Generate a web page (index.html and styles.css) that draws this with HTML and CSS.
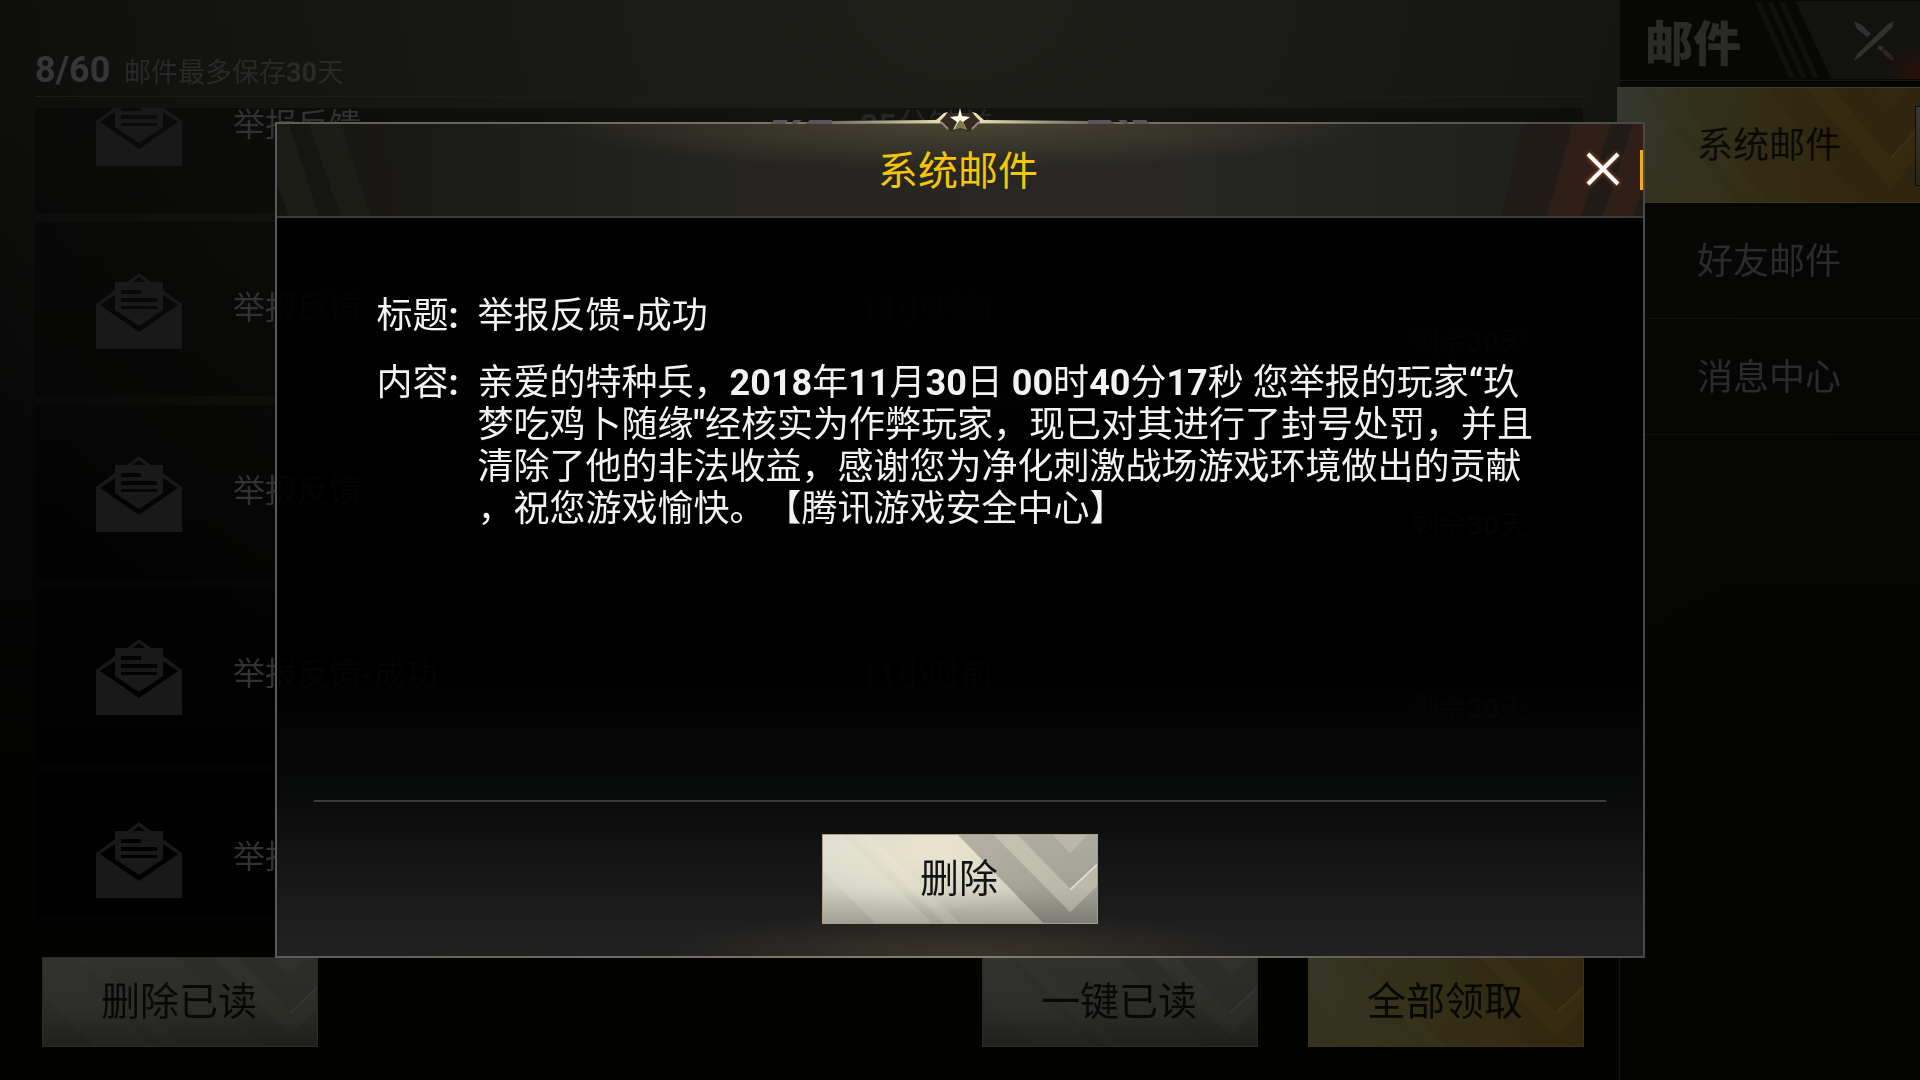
FILE: index.html
```
<!DOCTYPE html>
<html lang="zh-CN">
<head>
  <meta charset="UTF-8">
  <meta name="viewport" content="width=device-width, initial-scale=1.0">
  <link rel="stylesheet" href="styles.css">
  <title>邮件</title>
</head>
<body>
  <!-- shared shapes -->
  <svg class="defs" aria-hidden="true">
    <symbol id="mail" viewBox="0 0 86 76">
      <path d="M0 31 L43 59 L86 31 V76 H0 Z M0 31 L19 17 V22 L4 32 L43 59 L82 32 L67 22 V17 L86 31 L43 62 Z"/>
      <path d="M31 9 L43 0 L55 9 H49 L43 4 L37 9 Z"/>
      <path fill-rule="evenodd" d="M19 9 H67 V37 L43 53 L19 37 Z M25 17 V21 H45 V17 Z M25 25 V29 H61 V25 Z M25 33 V36 H61 V33 Z"/>
    </symbol>
    <symbol id="chevrons" viewBox="0 0 276 90" preserveAspectRatio="none">
      <path fill="#fff" opacity=".12" d="M20 0 L110 90 H52 L0 38 V0 Z M32 0 H48 L138 90 H122 Z"/>
      <path fill="#000" opacity=".22" d="M136 0 H276 V90 H222 Z"/>
      <path fill="#f4f2dc" opacity=".3" d="M172 0 H196 L249 55 L276 30 V52 L249 79 Z"/>
      <path fill="#f4f2dc" opacity=".2" d="M232 0 H266 L249 19 Z"/>
      <path fill="none" stroke="#fff" stroke-width="2" opacity=".5" d="M249 56 L276 30"/>
    </symbol>
  </svg>

  <div class="page">
    <main class="mail">
      <header class="mail-head">
        <span class="count">8/60</span>
        <span class="hint">邮件最多保存<b>30</b>天</span>
      </header>

      <div class="list-wrap">
        <ul class="list">
          <li class="item">
            <svg class="mail-icon"><use href="#mail"/></svg>
            <span class="name">举报反馈</span>
            <span class="time"><b>35</b>分钟前</span>
            <span class="left"></span>
          </li>
          <li class="item">
            <svg class="mail-icon"><use href="#mail"/></svg>
            <span class="name">举报反馈</span>
            <span class="time"><b>11</b>小时前</span>
            <span class="left">剩余<b>30</b>天</span>
          </li>
          <li class="item">
            <svg class="mail-icon"><use href="#mail"/></svg>
            <span class="name">举报反馈</span>
            <span class="time"></span>
            <span class="left">剩余<b>30</b>天</span>
          </li>
          <li class="item">
            <svg class="mail-icon"><use href="#mail"/></svg>
            <span class="name">举报反馈<b>-</b>成功</span>
            <span class="time"><b>11</b>小时前</span>
            <span class="left">剩余<b>30</b>天</span>
          </li>
          <li class="item">
            <svg class="mail-icon"><use href="#mail"/></svg>
            <span class="name">举报反馈</span>
            <span class="time"></span>
            <span class="left"></span>
          </li>
        </ul>
      </div>

      <footer class="mail-foot">
        <button class="btn dim"><svg><use href="#chevrons"/></svg><span>删除已读</span></button>
        <button class="btn dim push"><svg><use href="#chevrons"/></svg><span>一键已读</span></button>
        <button class="btn gold"><svg><use href="#chevrons"/></svg><span>全部领取</span></button>
      </footer>
    </main>

    <aside class="side">
      <div class="side-head">
        <h1>邮件</h1>
        <svg class="stripes" viewBox="0 0 66 78">
          <path d="M0 2 H6 L40 78 H34 Z M12 2 H18 L52 78 H46 Z M24 2 H30 L64 78 H58 Z"/>
        </svg>
        <button class="side-close" aria-label="返回">
          <svg viewBox="0 0 42 42">
            <path fill="#30302d" d="M41 1 L39 8 L7 37 L1 41 L4 34 L35 4 Z"/>
            <path fill="#303030" d="M1 1 L9 5 L18 14 L14 17 L4 9 Z M27 25 L31 28 L28 31 L24 28 Z"/>
            <path fill="#30231f" d="M32 29 L39 35 L41 41 L35 38 L29 32 Z"/>
          </svg>
        </button>
      </div>
      <nav class="tabs">
        <a class="tab active" href="#"><svg><use href="#chevrons"/></svg><span>系统邮件</span><i class="handle"></i></a>
        <a class="tab" href="#"><span>好友邮件</span></a>
        <a class="tab" href="#"><span>消息中心</span></a>
      </nav>
    </aside>
  </div>

  <div class="layer">
    <section class="modal" role="dialog" aria-labelledby="dialog-title">
      <svg class="crest" viewBox="0 0 380 28" aria-hidden="true">
        <defs>
          <linearGradient id="shine" gradientUnits="userSpaceOnUse" x1="60" y1="0" x2="320" y2="0">
            <stop offset="0" stop-color="#6d6a5e"/>
            <stop offset=".5" stop-color="#fff0c0"/>
            <stop offset="1" stop-color="#6d6a5e"/>
          </linearGradient>
        </defs>
        <path fill="url(#shine)" d="M60 14 L166 13 L174 6 L178 5 L170 16 H60 Z M320 14 L214 13 L206 6 L202 5 L210 16 H320 Z"/>
        <path fill="#55575a" d="M4 13 H18 L15 17 H0 Z M24 13 H32 L27 17 H21 Z M40 13 H62 V17 H35 Z M376 13 H362 L365 17 H380 Z M356 13 H348 L353 17 H359 Z M340 13 H318 V17 H345 Z"/>
        <path fill="#352b22" d="M178 6 L202 6 L210 14 L199 25 L190 22 L181 25 L170 14 Z"/>
        <path fill="none" stroke="#8f8a7e" stroke-width="2" d="M171 15 L178 22 M209 15 L202 22"/>
        <path fill="#fffbe8" d="M190 1 L192 9 L200 10 L193 15 L197 23 L190 18 L183 23 L187 15 L180 10 L188 9 Z"/>
        <path fill="#857650" d="M190 13 L193 15 L197 23 L190 21 L184 23 L187 17 Z"/>
      </svg>

      <header class="modal-head">
        <svg class="bars left-bars" viewBox="0 0 130 92" preserveAspectRatio="none">
          <path fill="#1c1d17" d="M0 0 H12 L42 92 H12 L0 60 Z M32 0 H64 L94 92 H64 Z"/>
          <path fill="#1b1714" d="M88 0 H106 L122 92 H100 Z"/>
        </svg>
        <h2 id="dialog-title">系统邮件</h2>
        <svg class="bars right-bars" viewBox="0 0 150 92" preserveAspectRatio="none">
          <path fill="#211b18" d="M30 0 H150 V92 H8 Z"/>
          <path fill="#301f19" d="M80 0 H118 L88 92 H54 Z M140 0 H150 V64 L140 92 H110 Z"/>
        </svg>
        <button class="close" aria-label="关闭">
          <svg viewBox="0 0 36 36"><path d="M3 3 L33 33 M33 3 L3 33"/></svg>
        </button>
      </header>

      <div class="modal-body">
        <dl class="letter">
          <dt>标题<b>:</b></dt>
          <dd>举报反馈<b>-</b>成功</dd>
          <dt>内容<b>:</b></dt>
          <dd>亲爱的特种兵，<b>2018</b>年<b>11</b>月<b>30</b>日 <b>00</b>时<b>40</b>分<b>17</b>秒 您举报的玩家<b>“</b>玖<br>
            梦吃鸡卜随缘<b>"</b>经核实为作弊玩家，现已对其进行了封号处罚，并且<br>
            清除了他的非法收益，感谢您为净化刺激战场游戏环境做出的贡献<br>
            ，祝您游戏愉快。【腾讯游戏安全中心】</dd>
        </dl>
      </div>

      <footer class="modal-foot">
        <button class="btn"><svg><use href="#chevrons"/></svg><span>删除</span></button>
      </footer>
    </section>
  </div>
</body>
</html>
```
FILE: styles.css
```
* {
  box-sizing: border-box;
}

body {
  margin: 0;
  background-color: #030302;
  color: #2b2b2b;
  font-family: Roboto, "Noto Sans CJK SC", sans-serif;
  text-spacing-trim: space-all;
  overflow: hidden;
}

h1, h2, ul, dl, dd {
  margin: 0;
  padding: 0;
}

button {
  padding: 0;
  border: none;
  background: none;
  font-family: inherit;
  cursor: pointer;
}

.defs {
  position: absolute;
  width: 0;
  height: 0;
}

.page {
  display: flex;
  height: 100vh;
  background: radial-gradient(ellipse 60% 75% at 50% 0, #20201b 0, #161712 50%, rgba(8, 9, 8, 0) 100%), linear-gradient(#0b0c0b, #030302 70%);
}

/* mail list */
.mail {
  flex: 1;
  display: flex;
  flex-direction: column;
  min-width: 0;
}

.mail-head {
  display: flex;
  align-items: center;
  height: 97px;
  margin: 0 36px 11px 35px;
  padding-top: 44px;
  border-bottom: 1px solid #1c1c18;
}

.count {
  width: 89px;
  font-size: 36px;
  font-weight: bold;
  color: #363636;
}

.hint {
  font-size: 27px;
  color: #292929;
}

.list-wrap {
  flex: 1;
  min-height: 0;
  margin: 0 36px 0 35px;
  overflow: hidden;
}

.list {
  display: flex;
  flex-direction: column;
  gap: 9px;
  margin-top: -69px;
  list-style: none;
}

.item {
  flex: none;
  display: grid;
  grid-template-columns: 198px 627px 1fr auto;
  align-items: center;
  height: 174px;
  padding-right: 56px;
  background: rgba(0, 0, 0, 0.35);
  font-size: 32px;
}

.mail-icon {
  width: 86px;
  height: 76px;
  margin: 4px 0 0 61px;
  fill: #191919;
}

.name,
.time {
  padding-bottom: 8px;
  color: #323232;
}

.time {
  color: #262626;
}

.left {
  align-self: end;
  padding-bottom: 36px;
  font-size: 28px;
}

.mail-foot {
  display: flex;
  gap: 50px;
  margin-top: 39px;
  padding: 0 35px 33px 42px;
}

.push {
  margin-left: auto;
}

/* buttons */
.btn {
  display: grid;
  place-items: center;
  width: 276px;
  height: 90px;
  border: 1px solid #b39c83;
  background: radial-gradient(ellipse at 40% 20%, rgba(236, 228, 208, 0.9), rgba(236, 228, 208, 0) 60%), linear-gradient(#dcdccb, #d0d0be 60%, #a0a096);
  color: #121517;
  font-size: 39px;
}

.btn > *,
.tab > * {
  grid-area: 1 / 1;
}

.btn span {
  padding: 0 2px 8px 0;
}

.btn svg,
.tab svg {
  width: 100%;
  height: 100%;
}

.btn.dim {
  border-color: #2f2923;
  background: linear-gradient(#30302d, #2b2b27 60%, #20201f);
  color: #070808;
}

.btn.gold {
  border-color: #3b331c;
  background: linear-gradient(100deg, #333425, #33301a 30%, #35290f);
  color: #080704;
}

.dim svg,
.gold svg {
  opacity: 0.3;
}

.dim svg path,
.tab svg path {
  fill: #000;
}

.dim svg,
.gold svg,
.tab svg {
  mix-blend-mode: soft-light;
}

/* sidebar */
.side {
  width: 301px;
  border-left: 1px solid #161614;
  background: rgba(5, 5, 4, 0.8);
}

.side-head {
  display: flex;
  height: 81px;
  padding-left: 25px;
  border-bottom: 1px solid #181815;
}

.side-head h1 {
  flex: 1;
  color: #2a2a26;
  font-size: 48px;
  font-weight: 900;
  line-height: 90px;
}

.stripes {
  width: 66px;
  height: 78px;
  margin-right: -26px;
  fill: #10100e;
}

.side-close {
  display: flex;
  align-items: center;
  width: 125px;
  height: 78px;
  margin-top: 1px;
  padding: 2px 0 0 58px;
  background: radial-gradient(circle at 100% 100%, #2c1006, rgba(20, 12, 8, 0) 25%), #121311;
  clip-path: polygon(0 0, 100% 0, 100% 100%, 29% 100%);
}

.side-close svg {
  width: 42px;
  height: 42px;
}

.tabs {
  display: flex;
  flex-direction: column;
  margin: 6px 0 0 -3px;
}

.tab {
  display: grid;
  align-items: center;
  height: 116px;
  border-bottom: 1px solid #11110f;
  color: #2b2b2b;
  font-size: 36px;
  text-decoration: none;
}

.tab svg {
  opacity: 0.3;
}

.tab span {
  padding: 0 0 6px 80px;
}

.tab.active {
  position: relative;
  border-top: 1px solid #3c3b2c;
  border-bottom-color: #3d381d;
  background: linear-gradient(100deg, #333630, #32301a 25%, #33280f 70%, #33260f);
  color: #0a0906;
}

/* drawer grip at the window edge */
.handle {
  position: absolute;
  top: 18px;
  right: 0;
  width: 5px;
  height: 80px;
  border: 1px solid #0c0b08;
  border-right: none;
  background: linear-gradient(#383838, #2a2613);
}

/* dialog */
.layer {
  position: fixed;
  inset: 0;
  display: flex;
  align-items: center;
  justify-content: center;
}

.modal {
  position: relative;
  width: 71.4%;
  border: 2px solid #484848;
  border-image: linear-gradient(90deg, #5a5a5a, #85806a 50%, #484848) 2;
  background: linear-gradient(rgba(0, 0, 0, 0.91) 66%, rgba(9, 10, 10, 0.95) 80%, #202020 98%);
}

.crest {
  position: absolute;
  top: -17px;
  left: 50%;
  width: 380px;
  height: 28px;
  transform: translateX(-50%);
}

.modal-head {
  display: grid;
  align-items: center;
  height: 94px;
  border-bottom: 2px solid #3c3c3a;
  background: radial-gradient(ellipse 30% 50% at 50% 0, #4a4432, rgba(60, 56, 44, 0)), linear-gradient(90deg, #141513, #262521 35%, #282724 65%, #1c1d1c);
}

.modal-head > * {
  grid-area: 1 / 1;
}

.modal-head h2 {
  padding: 0 4px 4px 0;
  color: #f3c50b;
  font-size: 40px;
  font-weight: normal;
  text-align: center;
}

.bars {
  height: 92px;
}

.left-bars {
  width: 130px;
}

.right-bars {
  justify-self: end;
  width: 150px;
}

.close {
  justify-self: end;
  width: 80px;
  height: 80px;
  background: linear-gradient(#f5ac12, #f5ac12) right center / 3px 40px no-repeat;
}

.close svg {
  width: 36px;
  height: 36px;
  fill: none;
  stroke: #fff;
  stroke-width: 4;
  filter: drop-shadow(0 0 2px #c0622a);
}

.modal-body {
  min-height: 584px;
  margin: 0 37px;
  padding: 77px 50px 0 63px;
  border-bottom: 2px solid #3a3b3b;
}

.letter {
  display: grid;
  grid-template-columns: 101px 1fr;
  row-gap: 25px;
  color: #f2f2f2;
  font-size: 36px;
  line-height: 42px;
  white-space: nowrap;
}

.modal-foot {
  display: flex;
  justify-content: center;
  padding: 32px 0;
  background: radial-gradient(ellipse 22% 30% at 50% 100%, #3a342b, rgba(50, 46, 40, 0));
}
```
